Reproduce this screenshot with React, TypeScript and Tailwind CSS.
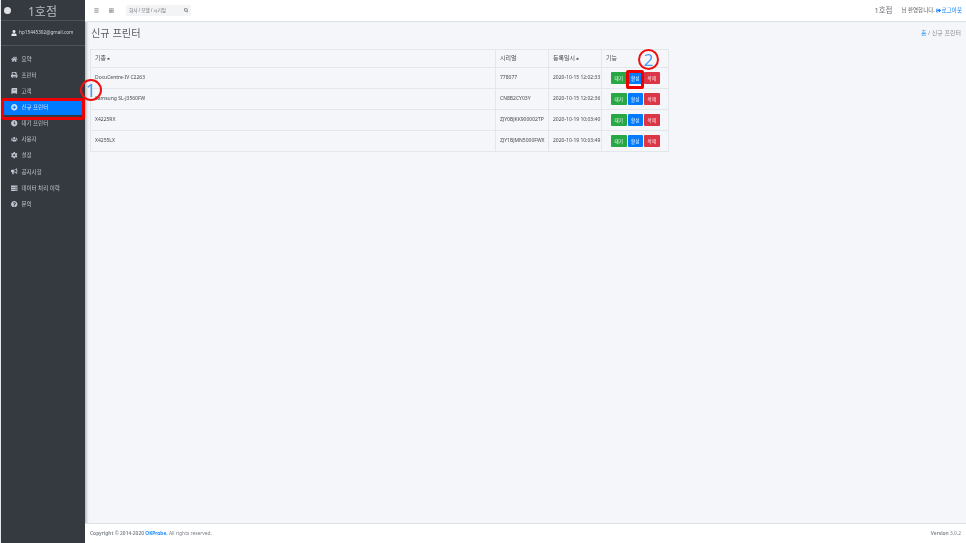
import { FaHome, FaPrint, FaBook, FaPlusCircle, FaClock, FaUsers, FaCog, FaBullhorn, FaServer, FaQuestionCircle, FaUser, FaBars, FaSearch, FaSignOutAlt, FaCaretUp } from "react-icons/fa";

const nav = [
  { icon: FaHome, label: "요약" },
  { icon: FaPrint, label: "프린터" },
  { icon: FaBook, label: "고객" },
  { icon: FaPlusCircle, label: "신규 프린터", active: true },
  { icon: FaClock, label: "대기 프린터" },
  { icon: FaUsers, label: "사용자" },
  { icon: FaCog, label: "설정" },
  { icon: FaBullhorn, label: "공지사항" },
  { icon: FaServer, label: "데이터 처리 이력" },
  { icon: FaQuestionCircle, label: "문의" },
];

const rows = [
  ["DocuCentre-IV C2263", "778077", "2020-10-15 12:02:33"],
  ["Samsung SL-J3560FW", "CN8B2CY03Y", "2020-10-15 12:02:36"],
  ["X4225RX", "ZJY0BJKK900002TP", "2020-10-19 10:03:40"],
  ["X4255LX", "ZJY1BJMN5000FWX", "2020-10-19 10:03:49"],
];

const font = { fontFamily: '"Noto Sans", "Noto Sans CJK KR", sans-serif' };

function Btn({ c, label }: { c: string; label: string }) {
  return <span className={`flex h-[12px] w-[15.5px] items-center justify-center rounded-[1px] text-[4.5px] text-white ${c}`}>{label}</span>;
}

export default function App() {
  return (
    <div className="relative flex h-[543px] w-[966px] overflow-hidden bg-[#f4f6f9] text-[#212529] blur-[0.35px]" style={font}>
      <aside className="ml-px flex w-[84px] shrink-0 flex-col bg-[#343a40] text-[#c2c7d0] shadow-[1px_0_3px_rgba(0,0,0,0.35)]">
        <div className="flex h-[21px] items-center border-b border-[#4b545c]">
          <span className="ml-[3px] h-[7px] w-[7px] rounded-full bg-[#dfe1e4]" />
          <span className="ml-[17px] mt-[3px] text-[12px] text-[#b9bdc2]">1호점</span>
        </div>
        <div className="flex h-[25px] items-center gap-[2px] border-b border-[#4b545c] pl-[10px] text-[4.7px] text-[#d4d7dc]">
          <FaUser className="h-[6px] w-[6px] text-[#e5e7ea]" />
          <span>hp15445302@gmail.com</span>
        </div>
        <nav className="mt-[5px] flex flex-col">
          {nav.map(({ icon: Icon, label, active }) => (
            <div key={label} className={`mx-[3px] flex h-[16.1px] items-center gap-[4px] rounded-[1px] pl-[7px] text-[5.5px] ${active ? "bg-[#007bff] text-[#d8e6f7]" : ""}`}>
              <Icon className="h-[6.5px] w-[6.5px] shrink-0" />
              <span>{label}</span>
            </div>
          ))}
        </nav>
      </aside>

      <div className="flex min-w-0 flex-1 flex-col">
        <header className="flex h-[22px] shrink-0 items-center border-b border-[#dee2e6] bg-white pl-[9px] pr-[4px] text-[#6b7075]">
          <FaBars className="h-[5px] w-[5px]" />
          <FaServer className="ml-[10px] h-[5px] w-[5px] text-[#9a9ea3]" />
          <div className="ml-[12px] flex h-[11px] w-[65px] items-center justify-between rounded-[1px] bg-[#f2f4f6] px-[3px] text-[4.5px]">
            <span>회사 / 모델 / 시리얼</span>
            <FaSearch className="h-[4.5px] w-[4.5px]" />
          </div>
          <span className="ml-auto text-[7.5px] text-[#6b7075]">1호점</span>
          <span className="ml-[9px] text-[5.5px] text-[#555]">님 환영합니다.</span>
          <span className="ml-[1px] flex items-center gap-px text-[5.5px] text-[#007bff]">
            <FaSignOutAlt className="h-[5px] w-[5px]" />로그아웃
          </span>
        </header>

        <main className="flex-1 px-[5px]">
          <div className="flex h-[27px] items-center justify-between pb-[4px]">
            <h1 className="ml-px text-[10.2px] text-[#5a5f64]">신규 프린터</h1>
            <div className="text-[6px] text-[#8a9097]"><span className="text-[#007bff]">홈</span> / 신규 프린터</div>
          </div>
          <table className="w-[578px] table-fixed border-collapse text-[5px] text-[#444a50]">
            <colgroup>
              <col className="w-[405px]" />
              <col className="w-[53px]" />
              <col className="w-[53px]" />
              <col className="w-[67px]" />
            </colgroup>
            <thead>
              <tr className="h-[18px] text-[6px] font-normal">
                <th className="border border-[#e3e6ea] pl-[4px] text-left font-normal"><span className="inline-flex items-center">기종<FaCaretUp className="h-[5px] w-[5px]" /></span></th>
                <th className="border border-[#e3e6ea] pl-[4px] text-left font-normal">시리얼</th>
                <th className="border border-[#e3e6ea] pl-[4px] text-left font-normal"><span className="inline-flex items-center">등록일시<FaCaretUp className="h-[5px] w-[5px]" /></span></th>
                <th className="border border-[#e3e6ea] pl-[4px] text-left font-normal">기능</th>
              </tr>
            </thead>
            <tbody>
              {rows.map(([m, s, d]) => (
                <tr key={m} className="h-[21px]">
                  <td className="border border-[#e3e6ea] pl-[4px] align-middle">{m}</td>
                  <td className="border border-[#e3e6ea] pl-[4px] align-middle">{s}</td>
                  <td className="border border-[#e3e6ea] pl-[4px] align-middle">{d}</td>
                  <td className="border border-[#e3e6ea] pl-[9px] align-middle">
                    <div className="flex gap-px">
                      <Btn c="bg-[#28a745]" label="대기" />
                      <Btn c="bg-[#007bff]" label="활성" />
                      <Btn c="bg-[#dc3545]" label="삭제" />
                    </div>
                  </td>
                </tr>
              ))}
            </tbody>
          </table>
        </main>

        <footer className="flex h-[20px] shrink-0 items-center justify-between border-t border-[#dee2e6] bg-white pl-[5px] pr-[5px] text-[4.9px] text-[#7b8188]">
          <span><b className="font-semibold">Copyright © 2014-2020 </b><b className="font-semibold text-[#007bff]">OKProbe.</b> All rights reserved.</span>
          <span><b className="font-semibold">Version</b> 3.0.2</span>
        </footer>
      </div>

      {/* annotations painted over the screenshot */}
      <div className="absolute left-[1px] top-[98px] h-[22px] w-[84px] rounded-[3px] border-[3px] border-[#f00000]" />
      <div className="absolute left-[80px] top-[79px] flex h-[22px] w-[22px] items-center justify-center rounded-full border-[2.5px] border-[#ee1111] text-[18px] leading-none text-[#4a9df0]">1</div>
      <div className="absolute left-[626px] top-[70px] h-[19px] w-[18px] rounded-[2px] border-[3px] border-[#ee0000]" />
      <div className="absolute left-[638px] top-[49px] flex h-[21px] w-[21px] items-center justify-center rounded-full border-[2.5px] border-[#ee1111] text-[17px] leading-none text-[#4a9df0]">2</div>
    </div>
  );
}
